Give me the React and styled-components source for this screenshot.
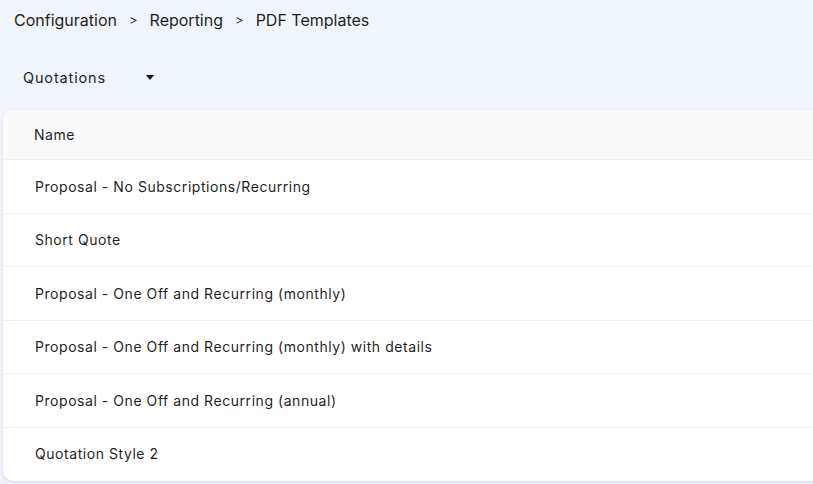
import React from "react";
import styled, { createGlobalStyle } from "styled-components";

const Global = createGlobalStyle`
  html, body { margin: 0; padding: 0; background: #f0f4fb; }
  body { font-family: "Inter", "Noto Sans", sans-serif; color: #1a1a1a; overflow: hidden; }
  * { box-sizing: border-box; }
`;

const Page = styled.div`
  width: 813px;
  height: 484px;
  display: flex;
  flex-direction: column;
  overflow: hidden;
`;

const Breadcrumb = styled.nav`
  display: flex;
  align-items: center;
  gap: 12px;
  height: 40px;
  padding-left: 14px;
  font-size: 16px;
  color: #1f1f1f;
`;

const Sep = styled.span`
  font-size: 13px;
  color: #333;
`;

const Toolbar = styled.div`
  display: flex;
  align-items: center;
  height: 70px;
  padding-top: 4px;
  padding-left: 23px;
`;

const Select = styled.button`
  display: flex;
  align-items: center;
  justify-content: space-between;
  width: 131px;
  padding: 0;
  border: none;
  background: transparent;
  font-family: inherit;
  font-size: 14.5px;
  letter-spacing: 0.85px;
  color: #1f1f1f;
`;

const Caret = styled.span`
  width: 0;
  height: 0;
  border-left: 4px solid transparent;
  border-right: 4px solid transparent;
  border-top: 5px solid #111;
`;

const Card = styled.div`
  margin-left: 3px;
  width: 830px;
  background: #fff;
  border-radius: 10px;
  box-shadow: 0 1px 3px rgba(120, 130, 160, 0.25);
  overflow: hidden;
`;

const HeaderRow = styled.div`
  height: 50px;
  display: flex;
  align-items: center;
  padding-left: 31px;
  background: #fafafa;
  border-bottom: 1px solid #eef0f3;
  font-size: 14px;
  letter-spacing: 0.5px;
  color: #1f1f1f;
`;

const Row = styled.div`
  height: 53.5px;
  display: flex;
  align-items: center;
  padding-left: 32px;
  border-bottom: 1px solid ${(p) => (p.$last ? "transparent" : "#f0f0f0")};
  font-size: 14px;
  letter-spacing: 0.55px;
  color: #1f1f1f;
`;

const rows = [
  "Proposal - No Subscriptions/Recurring",
  "Short Quote",
  "Proposal - One Off and Recurring (monthly)",
  "Proposal - One Off and Recurring (monthly) with details",
  "Proposal - One Off and Recurring (annual)",
  "Quotation Style 2",
];

export default function App() {
  return (
    <Page>
      <Global />
      <Breadcrumb>
        <span>Configuration</span>
        <Sep>&gt;</Sep>
        <span>Reporting</span>
        <Sep>&gt;</Sep>
        <span>PDF Templates</span>
      </Breadcrumb>
      <Toolbar>
        <Select>
          <span>Quotations</span>
          <Caret />
        </Select>
      </Toolbar>
      <Card>
        <HeaderRow>Name</HeaderRow>
        {rows.map((r, i) => (
          <Row key={r} $last={i === rows.length - 1}>
            {r}
          </Row>
        ))}
      </Card>
    </Page>
  );
}
